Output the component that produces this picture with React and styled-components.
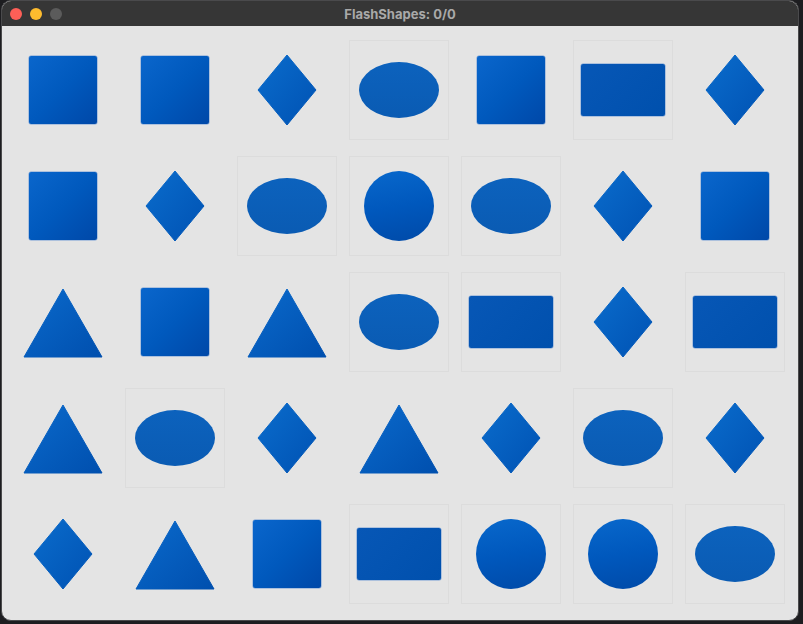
import React from "react";
import styled, { createGlobalStyle, css } from "styled-components";

const GlobalStyle = createGlobalStyle`
  html, body {
    margin: 0;
    padding: 0;
    background: #1d1d20;
  }
  body {
    font-family: "Inter", "Liberation Sans", sans-serif;
  }
`;

const Desktop = styled.div`
  width: 803px;
  height: 624px;
  padding: 0 0 0 1px;
  box-sizing: border-box;
  background: #1d1d20;
`;

const Window = styled.div`
  width: 798px;
  height: 621px;
  box-sizing: border-box;
  border: 1px solid #4a4a4c;
  border-radius: 10px;
  overflow: hidden;
  background: #e4e4e4;
  display: flex;
  flex-direction: column;
`;

const TitleBar = styled.div`
  height: 25px;
  flex: none;
  background: #363636;
  display: flex;
  align-items: center;
  position: relative;
  padding-left: 8px;
  gap: 8px;
`;

const Light = styled.span`
  width: 12px;
  height: 12px;
  border-radius: 50%;
  background: ${(p) => p.$color};
`;

const Title = styled.div`
  position: absolute;
  left: 0;
  right: 0;
  text-align: center;
  font-size: 13px;
  font-weight: 700;
  color: #a9a9a9;
  pointer-events: none;
`;

const Grid = styled.div`
  display: grid;
  grid-template-columns: repeat(7, 100px);
  grid-auto-rows: 100px;
  column-gap: 12px;
  row-gap: 16px;
  padding: 14px 0 0 11px;
`;

const Cell = styled.div`
  display: flex;
  align-items: center;
  justify-content: center;
  box-sizing: border-box;
  border: 1px solid ${(p) => (p.$framed ? "rgba(0,0,0,0.03)" : "transparent")};
`;

const fill = css`
  background: linear-gradient(135deg, #0a66cc 0%, #0059bd 50%, #0048a8 100%);
`;

const Square = styled.div`
  width: 68px;
  height: 68px;
  border-radius: 2px;
  ${fill};
  box-shadow: 0 0 0 0.5px rgba(10, 90, 200, 0.5);
`;

const Rect = styled.div`
  width: 84px;
  height: 52px;
  border-radius: 2px;
  background: linear-gradient(135deg, #0757b6 0%, #0050ad 100%);
  box-shadow: 0 0 0 0.5px rgba(10, 90, 200, 0.5);
`;

const Ellipse = styled.div`
  width: 80px;
  height: 56px;
  border-radius: 50%;
  background: linear-gradient(180deg, #0c62bd 0%, #0a5bb3 100%);
`;

const Circle = styled.div`
  width: 70px;
  height: 70px;
  border-radius: 50%;
  background: linear-gradient(170deg, #0868cc 0%, #0058bd 50%, #004aa8 100%);
`;

const Diamond = () => (
  <svg width="60" height="72" viewBox="0 0 60 72">
    <defs>
      <linearGradient id="dg" x1="0" y1="0" x2="1" y2="1">
        <stop offset="0" stopColor="#0a6ccc" />
        <stop offset="1" stopColor="#0052b3" />
      </linearGradient>
    </defs>
    <polygon
      points="30,1 59,36 30,71 1,36"
      fill="url(#dg)"
      stroke="url(#dg)"
      strokeWidth="1"
      strokeLinejoin="round"
    />
  </svg>
);

const Triangle = () => (
  <svg width="80" height="70" viewBox="0 0 80 70" style={{ marginTop: 2 }}>
    <defs>
      <linearGradient id="tg" x1="0" y1="0" x2="1" y2="1">
        <stop offset="0" stopColor="#0a6acc" />
        <stop offset="1" stopColor="#004fae" />
      </linearGradient>
    </defs>
    <polygon
      points="40,1 79,69 1,69"
      fill="url(#tg)"
      stroke="url(#tg)"
      strokeWidth="1"
      strokeLinejoin="round"
    />
  </svg>
);

const shapes = {
  S: { el: <Square />, framed: false },
  R: { el: <Rect />, framed: true },
  E: { el: <Ellipse />, framed: true },
  C: { el: <Circle />, framed: true },
  D: { el: <Diamond />, framed: false },
  T: { el: <Triangle />, framed: false },
};

const layout = [
  "SSDESRD",
  "SDECEDS",
  "TSTERDR",
  "TEDTDED",
  "DTSRCCE",
];

export default function App() {
  return (
    <Desktop>
      <GlobalStyle />
      <Window>
        <TitleBar>
          <Light $color="#fe5f57" />
          <Light $color="#febc2e" />
          <Light $color="#5b5b5b" />
          <Title>FlashShapes: 0/0</Title>
        </TitleBar>
        <Grid>
          {layout.map((row, r) =>
            row.split("").map((k, c) => (
              <Cell key={`${r}-${c}`} $framed={shapes[k].framed}>
                {shapes[k].el}
              </Cell>
            ))
          )}
        </Grid>
      </Window>
    </Desktop>
  );
}
